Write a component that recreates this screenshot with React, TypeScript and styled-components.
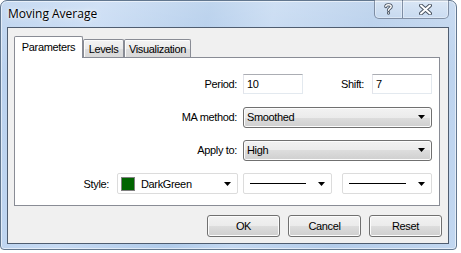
import React from "react";
import styled, { createGlobalStyle } from "styled-components";

const GlobalStyle = createGlobalStyle`
    html, body {
        margin: 0;
        padding: 0;
        background: #ffffff;
    }

    body {
        width: 461px;
        height: 253px;
        overflow: hidden;
        font-family: "Liberation Sans", Arial, sans-serif;
        font-size: 11px;
        letter-spacing: -0.35px;
        color: #000;
    }
`;

const CloseGlyph = () => (
    <svg width="13" height="11" viewBox="0 0 13 11">
        <path d="M2 1.5 L11 9.5 M11 1.5 L2 9.5" stroke="#4b5563" strokeWidth="4" strokeLinecap="round" />
        <path d="M2 1.5 L11 9.5 M11 1.5 L2 9.5" stroke="#ffffff" strokeWidth="2" strokeLinecap="round" />
    </svg>
);

const HelpGlyph = () => (
    <svg width="9" height="12" viewBox="0 0 9 12">
        <path d="M1.8 3.6 C1.8 1.2 7.2 1.2 7.2 3.6 C7.2 5.4 4.5 5.4 4.5 7.2 M4.5 9.9 L4.5 10.1" stroke="#4b5563" strokeWidth="3.2" fill="none" strokeLinecap="round" />
        <path d="M1.8 3.6 C1.8 1.2 7.2 1.2 7.2 3.6 C7.2 5.4 4.5 5.4 4.5 7.2 M4.5 9.9 L4.5 10.1" stroke="#ffffff" strokeWidth="1.4" fill="none" strokeLinecap="round" />
    </svg>
);

const Arrow = () => (
    <svg width="7" height="4" viewBox="0 0 7 4">
        <polygon points="0,0 7,0 3.5,4" fill="#000" />
    </svg>
);

const App: React.FC = () => {
    return (
        <>
            <GlobalStyle />
            <Window>
                <TitleBar>
                    <Title>Moving Average</Title>
                    <CaptionButtons>
                        <CaptionButton $width={28}><HelpGlyph /></CaptionButton>
                        <CaptionButton $width={47}><CloseGlyph /></CaptionButton>
                    </CaptionButtons>
                </TitleBar>
                <Client>
                    <TabStrip>
                        <Tab $active $width={69}>Parameters</Tab>
                        <Tab $width={41}>Levels</Tab>
                        <Tab $width={67}>Visualization</Tab>
                    </TabStrip>
                    <Panel>
                        <Label>Period:</Label>
                        <SplitCell>
                            <TextBox>10</TextBox>
                            <Pair>
                                <Label>Shift:</Label>
                                <TextBox>7</TextBox>
                            </Pair>
                        </SplitCell>

                        <Label>MA method:</Label>
                        <Combo>
                            <span>Smoothed</span>
                            <Arrow />
                        </Combo>

                        <Label>Apply to:</Label>
                        <Combo>
                            <span>High</span>
                            <Arrow />
                        </Combo>

                        <StyleCell>
                            <Label>Style:</Label>
                            <FlatSelect $width={121}>
                                <Swatch />
                                <SelectText>DarkGreen</SelectText>
                                <Arrow />
                            </FlatSelect>
                        </StyleCell>
                        <SplitCell>
                            <FlatSelect $width={89}>
                                <LineSample />
                                <Arrow />
                            </FlatSelect>
                            <FlatSelect $width={90}>
                                <LineSample />
                                <Arrow />
                            </FlatSelect>
                        </SplitCell>
                    </Panel>
                    <ButtonRow>
                        <Button>OK</Button>
                        <Button>Cancel</Button>
                        <Button>Reset</Button>
                    </ButtonRow>
                </Client>
            </Window>
        </>
    );
}


const Window = styled.div`
    box-sizing: border-box;
    width: 457px;
    height: 250px;
    display: flex;
    flex-direction: column;
    padding: 0 7px 5px 6px;
    border: 1px solid #62778f;
    border-radius: 7px 7px 4px 4px;
    background:
        linear-gradient(180deg, rgba(255, 255, 255, 0.2) 0%, rgba(255, 255, 255, 0) 30%),
        linear-gradient(100deg, #b9d1ee 0%, #c6daf3 20%, #b0cbea 42%, #c3d8f1 55%, #b3ccea 75%, #c2d7f0 100%);
    box-shadow: inset 0 0 0 1px rgba(255, 255, 255, 0.55);
`;

const TitleBar = styled.div`
    display: flex;
    justify-content: space-between;
    align-items: flex-start;
    height: 26px;
`;

const Title = styled.div`
    margin-top: 5px;
    padding-left: 1px;
    font-family: "Open Sans", "Noto Sans", sans-serif;
    font-size: 12px;
    line-height: 16px;
    letter-spacing: 0;
    color: #000;
    text-shadow: 0 0 6px rgba(255, 255, 255, 0.9), 0 0 3px rgba(255, 255, 255, 0.9);
`;

const CaptionButtons = styled.div`
    display: flex;
    margin-top: -1px;
`;

const CaptionButton = styled.div<{ $width: number }>`
    box-sizing: border-box;
    width: ${props => props.$width}px;
    height: 19px;
    display: flex;
    align-items: center;
    justify-content: center;
    border: 1px solid rgba(60, 75, 100, 0.55);
    border-top: none;
    background: linear-gradient(180deg, rgba(255, 255, 255, 0.35), rgba(255, 255, 255, 0.1));
    box-shadow: inset 0 0 0 1px rgba(255, 255, 255, 0.35);

    &:first-child {
        border-right: none;
        border-bottom-left-radius: 5px;
    }

    &:last-child {
        border-bottom-right-radius: 5px;
    }
`;

const Client = styled.div`
    flex: 1;
    display: flex;
    flex-direction: column;
    padding: 8px 6px 6px 6px;
    background: #f0f0f0;
    border: 1px solid #4f5d70;
`;

const TabStrip = styled.div`
    display: flex;
    align-items: flex-end;
    height: 21px;
    position: relative;
    z-index: 1;
`;

const Tab = styled.div<{ $active?: boolean; $width: number }>`
    box-sizing: border-box;
    width: ${props => props.$width}px;
    height: ${props => props.$active ? 22 : 18}px;
    margin-bottom: ${props => props.$active ? -1 : 0}px;
    display: flex;
    align-items: ${props => props.$active ? "flex-start" : "center"};
    justify-content: center;
    padding-top: ${props => props.$active ? 4 : 1}px;
    border: 1px solid #898c95;
    border-bottom: none;
    border-radius: 2px 2px 0 0;
    background: ${props => props.$active
        ? "#ffffff"
        : "linear-gradient(180deg, #f3f3f3 0%, #ebebeb 50%, #dedede 50%, #d9d9d9 100%)"};
    box-shadow: ${props => props.$active ? "none" : "inset 1px 1px 0 #fcfcfc"};
`;

const Panel = styled.div`
    box-sizing: border-box;
    height: 149px;
    margin-right: 2px;
    padding: 16px 7px 0 1px;
    display: grid;
    grid-template-columns: 1fr 189px;
    grid-template-rows: 20px 20px 20px 21px;
    column-gap: 6px;
    row-gap: 13px;
    align-items: center;
    background: #ffffff;
    border: 1px solid #898c95;
`;

const Label = styled.span`
    justify-self: end;
    white-space: nowrap;
`;

const SplitCell = styled.div`
    display: flex;
    justify-content: space-between;
    align-items: center;
    height: 100%;
`;

const Pair = styled.div`
    display: flex;
    align-items: center;
    gap: 8px;
    height: 100%;
`;

const StyleCell = styled.div`
    display: flex;
    justify-content: flex-end;
    align-items: center;
    gap: 8px;
    height: 100%;
    margin-right: -1px;
`;

const TextBox = styled.div`
    box-sizing: border-box;
    width: 60px;
    height: 20px;
    display: flex;
    align-items: center;
    padding-left: 3px;
    background: #ffffff;
    border: 1px solid;
    border-color: #abadb3 #e3e9ef #e3e9ef #e2e3ea;
`;

const Combo = styled.div`
    box-sizing: border-box;
    height: 21px;
    display: flex;
    align-items: center;
    justify-content: space-between;
    padding: 0 6px 0 3px;
    border: 1px solid #707070;
    border-radius: 3px;
    background: linear-gradient(180deg, #f2f2f2 0%, #ebebeb 50%, #dddddd 50%, #cfcfcf 100%);
    box-shadow: inset 0 0 0 1px #fcfcfc;
`;

const FlatSelect = styled.div<{ $width: number }>`
    box-sizing: border-box;
    width: ${props => props.$width}px;
    height: 21px;
    display: flex;
    align-items: center;
    gap: 6px;
    padding: 0 6px 0 3px;
    background: #ffffff;
    border: 1px solid #dcdcdc;
    border-radius: 2px;
`;

const Swatch = styled.span`
    box-sizing: border-box;
    width: 14px;
    height: 14px;
    flex: none;
    background: #006400;
    border: 1px solid #808080;
`;

const SelectText = styled.span`
    flex: 1;
    white-space: nowrap;
`;

const LineSample = styled.span`
    flex: 1;
    height: 1px;
    margin: 0 6px 0 3px;
    background: #000;
`;

const ButtonRow = styled.div`
    display: flex;
    justify-content: flex-end;
    gap: 8px;
    margin-top: 9px;
`;

const Button = styled.div`
    box-sizing: border-box;
    width: 73px;
    height: 22px;
    display: flex;
    align-items: center;
    justify-content: center;
    border: 1px solid #707070;
    border-radius: 3px;
    background: linear-gradient(180deg, #f2f2f2 0%, #ebebeb 50%, #dddddd 50%, #cfcfcf 100%);
    box-shadow: inset 0 0 0 1px #fcfcfc;
`;

export default App;
